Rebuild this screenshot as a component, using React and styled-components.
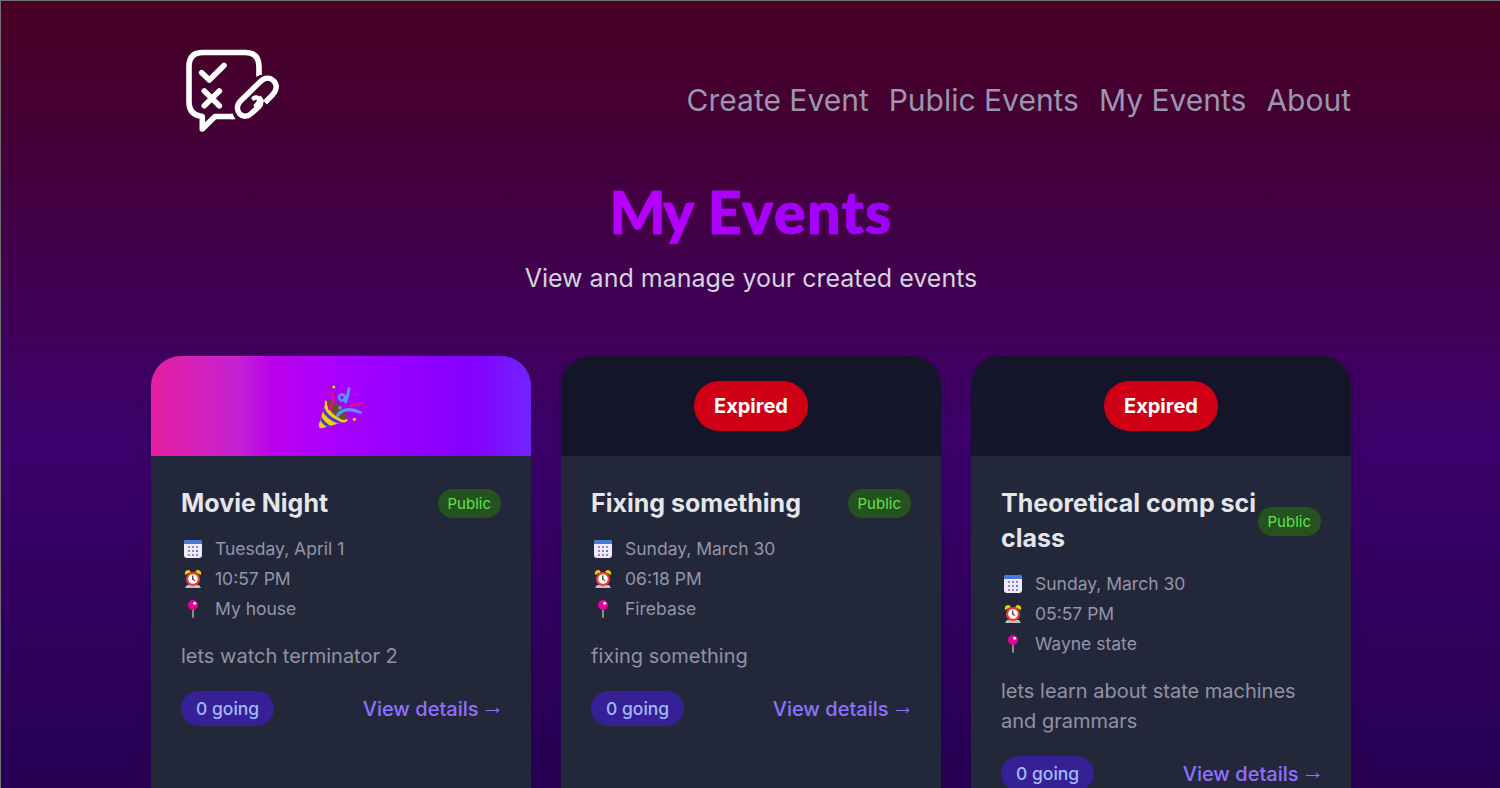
import React from 'react';
import styled, { createGlobalStyle } from 'styled-components';

const GlobalStyle = createGlobalStyle`
  *, *::before, *::after { box-sizing: border-box; }
  html, body { margin: 0; background: #270053; overflow: hidden; }
  h1, h2, p { margin: 0; }
  a { color: inherit; text-decoration: none; }
`;

const Page = styled.div`
  height: 100vh;
  overflow: hidden;
  padding-left: 150px;
  border-top: 1px solid #727272;
  border-left: 1px solid #727272;
  font-family: Inter, 'Liberation Sans', sans-serif;
  background: linear-gradient(180deg, #480023 0%, #44003a 20%, #40005a 42%, #3c006c 56%, #30005d 80%, #270053 100%);
`;

const Content = styled.div`
  width: 1200px;
`;

const Header = styled.header`
  height: 160px;
  display: flex;
  justify-content: space-between;
  align-items: flex-start;
  padding: 44px 0 0 30px;
`;

const LogoSvg = styled.svg`
  display: block;
  width: 104px;
  height: 92px;
`;

const Nav = styled.nav`
  display: flex;
  gap: 20px;
  padding-top: 33px;
  color: #9996ad;
  font-size: 30px;
  line-height: 45px;
  white-space: nowrap;
`;

const Hero = styled.section`
  height: 195px;
  display: flex;
  flex-direction: column;
  align-items: center;
  padding-top: 14px;
`;

const Title = styled.h1`
  font-family: Lato, sans-serif;
  font-size: 59px;
  font-weight: 900;
  line-height: 73px;
  letter-spacing: 1.4px;
  color: transparent;
  background: linear-gradient(90deg, #b900ff, #9c00ff);
  background-clip: text;
  -webkit-text-stroke: 0.6px #aa00ff;
  white-space: nowrap;
`;

const TightWord = styled.span`
  letter-spacing: -2px;
`;

const Subtitle = styled.p`
  margin-top: 11px;
  font-size: 25px;
  line-height: 38px;
  color: #d5d3df;
  white-space: nowrap;
`;

const Cards = styled.main`
  display: grid;
  grid-template-columns: repeat(3, 380px);
  gap: 30px;
`;

const Card = styled.article`
  height: 480px;
  border-radius: 30px;
  overflow: hidden;
  background: #22283a;
  box-shadow: 0 12px 19px -4px rgba(0, 0, 0, 0.1), 0 5px 8px -5px rgba(0, 0, 0, 0.1);
`;

const Banner = styled.div`
  height: 100px;
  display: flex;
  align-items: center;
  justify-content: center;
  background: ${(p) =>
    p.$expired
      ? '#151529'
      : 'linear-gradient(90deg, #e41fa0 0%, #c621d3 23%, #ba00ec 32.5%, #a900ff 48%, #8400ff 84%, #7424ff 100%)'};
`;

const Expired = styled.span`
  height: 50px;
  padding: 0 20px;
  border-radius: 25px;
  background: #cf0015;
  color: #fff;
  font-size: 20px;
  font-weight: 700;
  line-height: 50px;
`;

const Body = styled.div`
  padding: 30px;
`;

const TitleRow = styled.div`
  display: flex;
  align-items: center;
  justify-content: space-between;
`;

const EventName = styled.h2`
  font-size: 25px;
  font-weight: 700;
  line-height: 35px;
  color: #e5e5eb;
`;

const Visibility = styled.span`
  flex: none;
  padding: 2px 10px;
  border-radius: 15px;
  background: #25521f;
  color: #5fe14e;
  font-size: 15px;
  line-height: 25px;
`;

const Facts = styled.div`
  display: flex;
  flex-direction: column;
  gap: 5px;
  margin-top: 15px;
`;

const Fact = styled.div`
  display: flex;
  align-items: center;
  gap: 10px;
  font-size: 17.5px;
  line-height: 25px;
  color: #9694aa;
`;

const FactIcon = styled.svg`
  width: 24px;
  height: 24px;
`;

const Description = styled.p`
  margin-top: 20px;
  font-size: 20px;
  line-height: 30px;
  color: #9391a5;
`;

const Footer = styled.div`
  display: flex;
  align-items: center;
  justify-content: space-between;
  margin-top: 20px;
`;

const Going = styled.span`
  padding: 5px 15px;
  border-radius: 18px;
  background: #352095;
  color: #a2b8fa;
  font-size: 17.5px;
  font-weight: 500;
  line-height: 25px;
`;

const Details = styled.a`
  display: flex;
  gap: 2.5px;
  color: #9170ff;
  font-size: 20px;
  font-weight: 500;
  line-height: 30px;
`;

const Arrow = styled.span`
  margin-right: -3px;
  font-family: 'Liberation Sans', sans-serif;
  font-size: 23px;
  font-weight: 400;
  line-height: 25px;
`;

const Logo = () => (
  <LogoSvg viewBox="0 0 104 92" fill="none" stroke="#fff" strokeWidth="5.600" strokeLinecap="round" strokeLinejoin="round">
    <path strokeLinecap="butt" d="M78 30V21.500Q78 7.500 64 7.500H22Q8 7.500 8 21.500V57Q8 69 19 71L21.300 71.500V84L34 71.500H52" />
    <path d="M50 68.700H51.500L54.500 74.300H50ZM75.200 29H80.800L75.200 32Z" fill="#fff" stroke="none" />
    <path d="M20.700 27.700 28.300 35 43 20.500M23.300 46 38.300 60.700M38.300 46 23.300 60.700" />
    <path
      strokeWidth="5.400"
      strokeLinecap="butt"
      d="M84 57.500 91.500 49.800C96.500 44.500 96 39 92.500 35.700C89 32.300 84 32.200 79.500 36.500L59.500 56C55.500 60 55.500 65.500 58.800 69C62 72.200 67 71.800 70.500 68.300L77.500 62C81 58.500 80.500 54.500 77.500 53"
    />
    <path d="M72.800 53.300Q75.500 51 78 54.500Q79 57 75 60.500" strokeWidth="4.500" />
  </LogoSvg>
);

const Popper = () => (
  <svg width="46" height="46" viewBox="0 0 46 46" fill="none" strokeLinecap="round">
    <defs>
      <clipPath id="cone">
        <path d="M8 18 1 41Q0 46 5 45L29 38 20 24Z" />
      </clipPath>
    </defs>
    <g clipPath="url(#cone)">
      <path d="M0 10H34V46H0Z" fill="#f4cf10" />
      <path d="M4 23Q9 38 28 41" stroke="#4b3bd5" strokeWidth="3" />
      <path d="M1 32Q5 42 16 46" stroke="#4b3bd5" strokeWidth="3" />
    </g>
    <ellipse cx="18.500" cy="27.300" rx="13.300" ry="6.500" transform="rotate(44 18.500 27.300)" fill="#6b4838" />
    <path d="M7.800 18.500C7 24 12 30 18 34.500S27.500 38.500 28.500 37.200" stroke="#f4cf10" strokeWidth="2.200" />
    <path d="M13.700 10.500Q17.500 18 11.500 25.500M32 23.500Q37 20.500 44 21.500" stroke="#e40892" strokeWidth="3" />
    <path d="M19.500 32.500Q27 22.500 42.500 29.500M31 5.500Q30 13 27.700 19" stroke="#5596f7" strokeWidth="3" />
    <circle cx="24" cy="14.500" r="3" stroke="#5596f7" strokeWidth="2.400" />
    <circle cx="15.700" cy="4" r="1.600" fill="#f4cf10" />
    <circle cx="36.300" cy="36.300" r="1.600" fill="#f4cf10" />
    <circle cx="7.300" cy="11.300" r="1.700" fill="#cc0cb5" />
    <circle cx="37" cy="11.300" r="1.700" fill="#cc0cb5" />
    <circle cx="22" cy="24.700" r="1.800" fill="#5596f7" />
  </svg>
);

const CalendarIcon = () => (
  <FactIcon viewBox="0 0 24 24">
    <rect x="3" y="3" width="18" height="18" rx="3" fill="#f0e9fa" />
    <path d="M3 7V6q0-3 3-3h12q3 0 3 3v1Z" fill="#4779d8" />
    <g fill="#958baa">
      {[9, 13, 17].flatMap((y) => [7, 11, 15].map((x) => (
        <rect key={`${x}-${y}`} x={x} y={y} width="2" height="2" fill={x === 15 && y === 13 ? '#3187ed' : undefined} />
      )))}
    </g>
  </FactIcon>
);

const ClockIcon = () => (
  <FactIcon viewBox="0 0 24 24" fill="none">
    <path d="M6 18h12l2 3H4Z" fill="#c4bfbd" />
    <path d="M4 8Q3 3 8 3l2 2M20 8Q21 3 16 3l-2 2" fill="#f2cd00" />
    <circle cx="12" cy="12" r="5.900" fill="#fff" stroke="#e54435" strokeWidth="2.200" />
    <path d="M11.700 8.500V13" stroke="#554659" strokeWidth="1.500" />
    <path d="m12 12 2 2" stroke="#e43c36" strokeWidth="1.500" />
  </FactIcon>
);

const PinIcon = () => (
  <FactIcon viewBox="0 0 24 24">
    <path d="M12 12v8" stroke="#8b8b90" strokeWidth="2" strokeLinecap="round" />
    <circle cx="12" cy="8" r="5" fill="#e4009a" />
    <circle cx="13.700" cy="6.300" r="1.500" fill="#fff" />
  </FactIcon>
);

const events = [
  { name: 'Movie Night', date: 'Tuesday, April 1', time: '10:57 PM', place: 'My house', text: 'lets watch terminator 2' },
  { name: 'Fixing something', date: 'Sunday, March 30', time: '06:18 PM', place: 'Firebase', text: 'fixing something', expired: true },
  { name: 'Theoretical comp sci class', date: 'Sunday, March 30', time: '05:57 PM', place: 'Wayne state', text: 'lets learn about state machines and grammars', expired: true },
];

const EventCard = ({ event }) => (
  <Card>
    <Banner $expired={event.expired}>{event.expired ? <Expired>Expired</Expired> : <Popper />}</Banner>
    <Body>
      <TitleRow>
        <EventName>{event.name}</EventName>
        <Visibility>Public</Visibility>
      </TitleRow>
      <Facts>
        <Fact><CalendarIcon />{event.date}</Fact>
        <Fact><ClockIcon />{event.time}</Fact>
        <Fact><PinIcon />{event.place}</Fact>
      </Facts>
      <Description>{event.text}</Description>
      <Footer>
        <Going>0 going</Going>
        <Details href="#">View details <Arrow>→</Arrow></Details>
      </Footer>
    </Body>
  </Card>
);

export default function App() {
  return (
    <Page>
      <GlobalStyle />
      <Content>
        <Header>
          <Logo />
          <Nav>
            <a href="#">Create Event</a>
            <a href="#">Public Events</a>
            <a href="#">My Events</a>
            <a href="#">About</a>
          </Nav>
        </Header>
        <Hero>
          <Title><TightWord>My</TightWord> Events</Title>
          <Subtitle>View and manage your created events</Subtitle>
        </Hero>
        <Cards>
          {events.map((event) => <EventCard key={event.name} event={event} />)}
        </Cards>
      </Content>
    </Page>
  );
}
